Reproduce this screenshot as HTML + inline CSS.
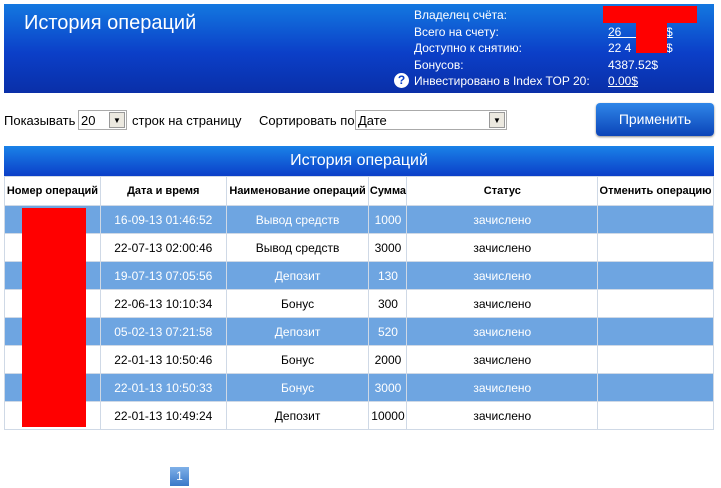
<!DOCTYPE html>
<html><head><meta charset="utf-8"><style>
*{margin:0;padding:0;box-sizing:border-box}
body{width:721px;height:488px;background:#fff;font-family:"Liberation Sans",Arial,sans-serif;position:relative;overflow:hidden;font-size:12px}
.a{position:absolute}
.hdr{left:4px;top:4px;width:710px;height:89px;background:linear-gradient(#1378e0,#0b3fc8 55%,#0a2fa8)}
.w{color:#fff}
.sel{background:#fff;border:1px solid #aaa;height:20px;font-size:13px;padding:2px 2px}
.arr{position:absolute;right:1px;top:1px;width:16px;height:16px;background:#ece9e0;border:1px solid #999;font-size:8px;text-align:center;line-height:15px}
.btn{left:596px;top:103px;width:118px;height:33px;border-radius:4px;background:linear-gradient(#2f86e8,#0b44b8);color:#fff;font-size:14px;text-align:center;line-height:33px;box-shadow:0 1px 2px #888}
table{position:absolute;left:4px;top:176px;width:710px;border-collapse:collapse;font-size:12px}
td,th{border:1px solid #cfd9e6;text-align:center;height:28px;padding:0}
th{font-weight:bold;font-size:11px;height:29px;background:#fff}
tr.b td{background:#6ea5e1;color:#fff}
</style></head><body>
<div class="a hdr"></div>
<div class="a w" style="left:24px;top:12px;font-size:20px">История операций</div>
<div class="a w" style="left:414px;top:7px;line-height:16.6px;font-size:12px">Владелец счёта:<br>Всего на счету:<br>Доступно к снятию:<br>Бонусов:<br>Инвестировано в Index TOP 20:</div>
<div class="a w" style="left:608px;top:7px;line-height:16.6px;font-size:12px;width:70px"><br><u>26 &nbsp;&nbsp;&nbsp;&nbsp;&nbsp;&nbsp;&nbsp;&nbsp;&nbsp;&nbsp;&nbsp;</u><br>22 4<br>4387.52$<br><u>0.00$</u></div>
<div class="a w" style="left:666px;top:23.6px;line-height:16.6px;font-size:12px"><u>$</u><br>$</div>
<div class="a" style="left:394px;top:73px;width:15px;height:15px;border-radius:50%;background:#fff;color:#0b3fc8;font-weight:bold;font-size:12px;text-align:center;line-height:15px">?</div>
<div class="a" style="left:603px;top:6px;width:94px;height:17px;background:#f00"></div>
<div class="a" style="left:636px;top:23px;width:31px;height:30px;background:#f00"></div>
<div class="a" style="left:4px;top:113px;font-size:13px">Показывать</div>
<div class="a sel" style="left:78px;top:110px;width:49px">20<div class="arr">▼</div></div>
<div class="a" style="left:132px;top:113px;font-size:13px">строк на страницу</div>
<div class="a" style="left:259px;top:113px;font-size:13px">Сортировать по</div>
<div class="a sel" style="left:355px;top:110px;width:152px">Дате<div class="arr">▼</div></div>
<div class="a btn">Применить</div>
<div class="a w" style="left:4px;top:146px;width:710px;height:30px;background:linear-gradient(#1a82e8,#0b3fc8);text-align:center;font-size:16px;line-height:30px">История операций</div>
<table>
<colgroup><col style="width:96px"><col style="width:126px"><col style="width:143px"><col style="width:38px"><col style="width:191px"><col style="width:116px"></colgroup>
<tr><th>Номер операций</th><th>Дата и время</th><th>Наименование операций</th><th>Сумма</th><th>Статус</th><th>Отменить операцию</th></tr>
<tr class="b"><td></td><td>16-09-13 01:46:52</td><td>Вывод средств</td><td>1000</td><td>зачислено</td><td></td></tr>
<tr><td></td><td>22-07-13 02:00:46</td><td>Вывод средств</td><td>3000</td><td>зачислено</td><td></td></tr>
<tr class="b"><td></td><td>19-07-13 07:05:56</td><td>Депозит</td><td>130</td><td>зачислено</td><td></td></tr>
<tr><td></td><td>22-06-13 10:10:34</td><td>Бонус</td><td>300</td><td>зачислено</td><td></td></tr>
<tr class="b"><td></td><td>05-02-13 07:21:58</td><td>Депозит</td><td>520</td><td>зачислено</td><td></td></tr>
<tr><td></td><td>22-01-13 10:50:46</td><td>Бонус</td><td>2000</td><td>зачислено</td><td></td></tr>
<tr class="b"><td></td><td>22-01-13 10:50:33</td><td>Бонус</td><td>3000</td><td>зачислено</td><td></td></tr>
<tr><td></td><td>22-01-13 10:49:24</td><td>Депозит</td><td>10000</td><td>зачислено</td><td></td></tr>
</table>
<div class="a" style="left:22px;top:208px;width:64px;height:219px;background:#f00"></div>
<div class="a w" style="left:170px;top:467px;width:19px;height:19px;background:linear-gradient(#7fb0e8,#3a78c8);text-align:center;line-height:19px;font-size:12px">1</div>
</body></html>
